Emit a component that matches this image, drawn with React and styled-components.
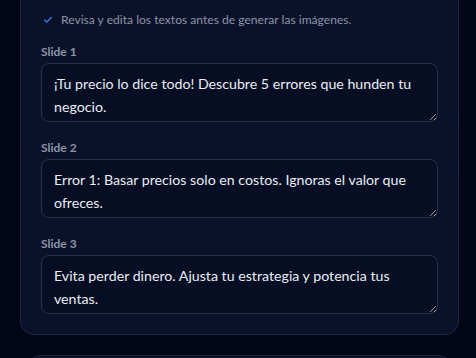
import React from 'react';
import styled, { createGlobalStyle } from 'styled-components';

const GlobalStyle = createGlobalStyle`
  html, body {
    margin: 0;
    padding: 0;
    background: #030617;
  }
  body {
    font-family: "Segoe UI", Lato, "Noto Sans", sans-serif;
    color: #e2e8f0;
  }
`;

const Page = styled.div`
  width: 476px;
  height: 358px;
  overflow: hidden;
  padding: 0 17px 0 20px;
  box-sizing: border-box;
  background: radial-gradient(ellipse at 50% 40%, #050a1d 0%, #030617 70%);
`;

const Card = styled.section`
  margin-top: -20px;
  background: #0a1128;
  border: 1px solid #1e2740;
  border-radius: 14px;
  padding: 30px 20px 20px;
  display: flex;
  flex-direction: column;
`;

const NextCard = styled.div`
  margin: 20px 7px 0;
  height: 40px;
  border: 1px solid #1e2740;
  border-bottom: none;
  border-radius: 14px 14px 0 0;
  background: #0a1128;
`;

const Hint = styled.p`
  margin: 0 0 15px 2px;
  display: flex;
  align-items: center;
  gap: 8px;
  font-size: 12.1px;
  color: #8b95a8;
  line-height: 18px;
`;

const Field = styled.label`
  display: flex;
  flex-direction: column;
  gap: 3px;
  & + & {
    margin-top: 18px;
  }
`;

const FieldLabel = styled.span`
  font-size: 12px;
  font-weight: 700;
  color: #8b95a8;
  line-height: 16px;
`;

const TextArea = styled.textarea`
  width: 100%;
  box-sizing: border-box;
  height: 59px;
  margin: 0;
  padding: 8px 12px;
  background: #070d22;
  border: 1px solid #29324a;
  border-radius: 8px;
  color: #e8edf5;
  font-family: inherit;
  font-size: 14.2px;
  line-height: 23px;
  resize: vertical;
  outline: none;
  overflow: hidden;
`;

const slides = [
  '¡Tu precio lo dice todo! Descubre 5 errores que hunden tu negocio.',
  'Error 1: Basar precios solo en costos. Ignoras el valor que ofreces.',
  'Evita perder dinero. Ajusta tu estrategia y potencia tus ventas.',
];

const Check = () => (
  <svg width="10" height="10" viewBox="0 0 24 24" fill="none" stroke="#3b82f6" strokeWidth="3" strokeLinecap="round" strokeLinejoin="round">
    <polyline points="20 6 9 17 4 12" />
  </svg>
);

export default function App() {
  return (
    <>
      <GlobalStyle />
      <Page>
        <Card>
          <Hint>
            <Check />
            Revisa y edita los textos antes de generar las imágenes.
          </Hint>
          {slides.map((text, i) => (
            <Field key={i}>
              <FieldLabel>Slide {i + 1}</FieldLabel>
              <TextArea defaultValue={text} />
            </Field>
          ))}
        </Card>
        <NextCard />
      </Page>
    </>
  );
}
